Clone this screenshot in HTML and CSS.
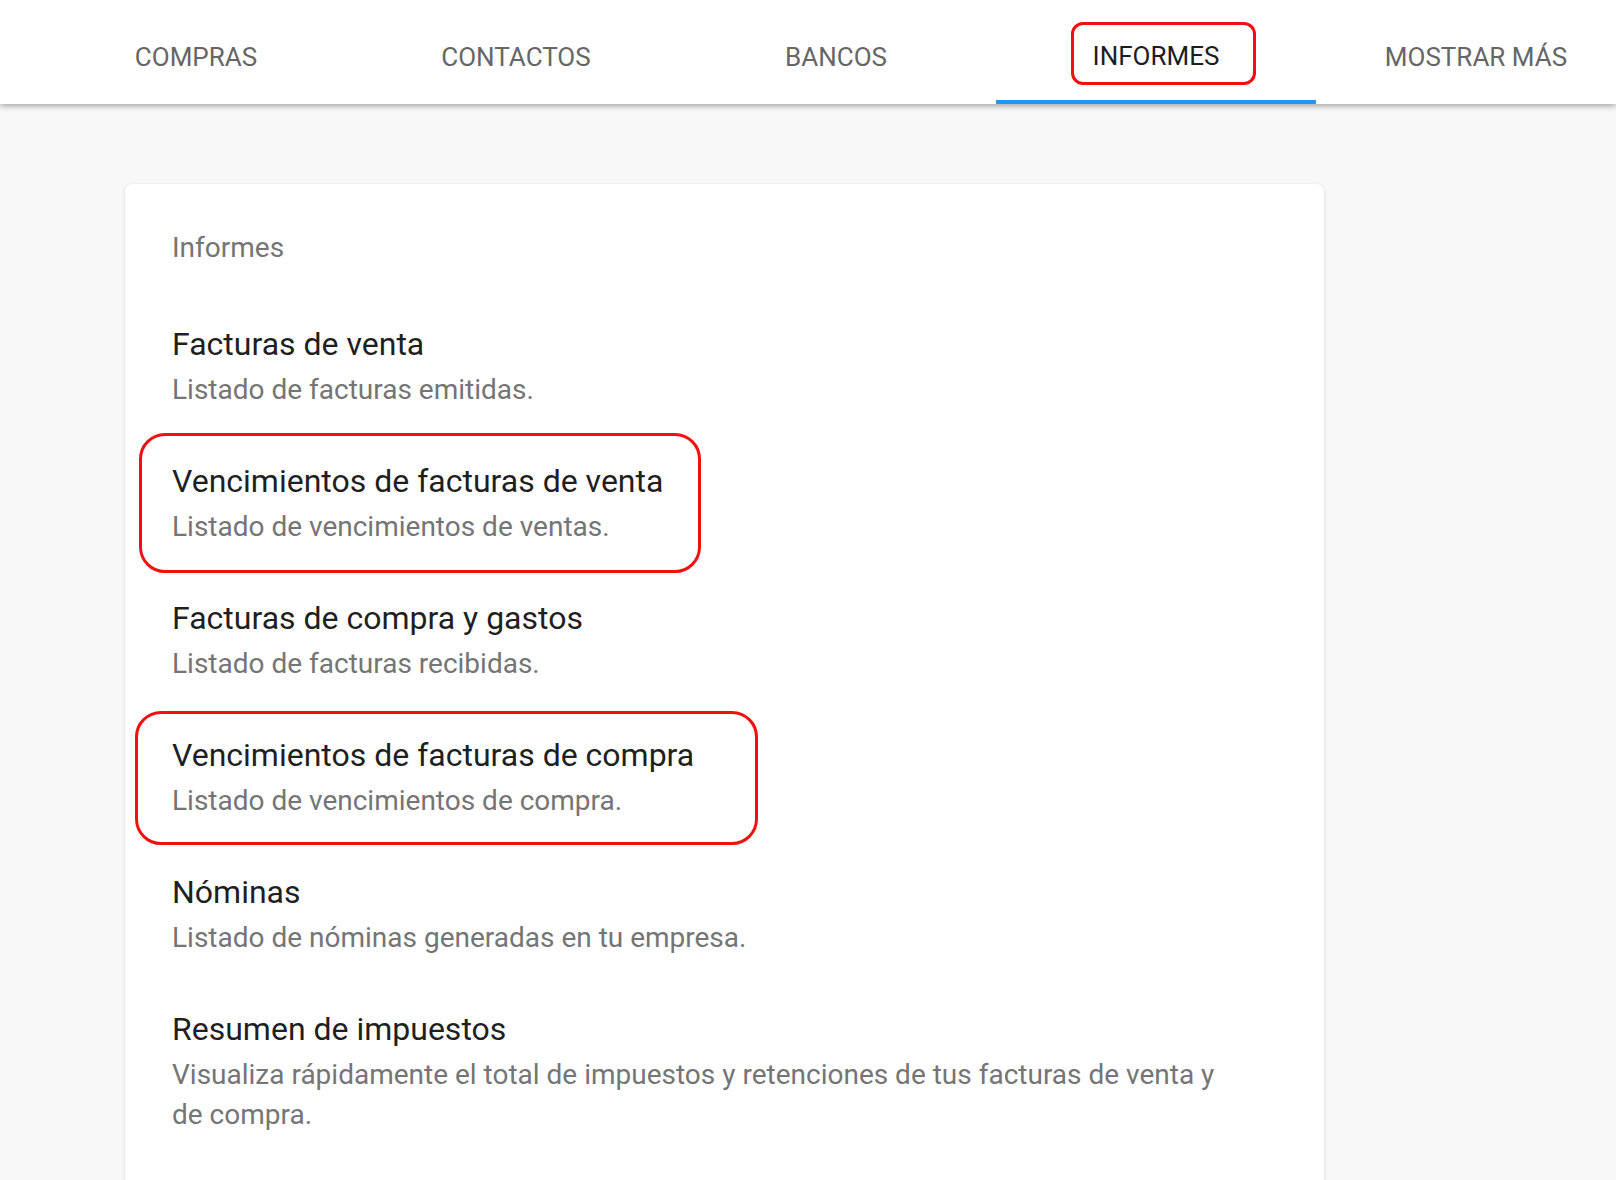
FILE: index.html
```html
<!DOCTYPE html>
<html lang="es">
<head>
    <meta charset="UTF-8">
    <title>Informes</title>
    <link rel="stylesheet" href="styles.css">
</head>
<body>
<!--barra de pestañas-->
<div class="tabs">
    <a class="tab" href="#">Compras</a>
    <a class="tab" href="#">Contactos</a>
    <a class="tab" href="#">Bancos</a>
    <a class="tab active" href="#"><span class="mark">Informes</span></a>
    <a class="tab" href="#">Mostrar más</a>
</div>

<div class="page">
    <div class="card">
        <div class="card-title">Informes</div>
        <ul class="reports">
            <li>
                <div class="name">Facturas de venta</div>
                <div class="desc">Listado de facturas emitidas.</div>
            </li>
            <li>
                <div class="name">Vencimientos de facturas de venta</div>
                <div class="desc">Listado de vencimientos de ventas.</div>
                <div class="note note-1"></div>
            </li>
            <li>
                <div class="name">Facturas de compra y gastos</div>
                <div class="desc">Listado de facturas recibidas.</div>
            </li>
            <li>
                <div class="name">Vencimientos de facturas de compra</div>
                <div class="desc">Listado de vencimientos de compra.</div>
                <div class="note note-2"></div>
            </li>
            <li>
                <div class="name">Nóminas</div>
                <div class="desc">Listado de nóminas generadas en tu empresa.</div>
            </li>
            <li>
                <div class="name">Resumen de impuestos</div>
                <div class="desc wide">Visualiza rápidamente el total de impuestos y retenciones de tus facturas de venta y de compra.</div>
            </li>
        </ul>
    </div>
</div>
</body>
</html>
```

FILE: styles.css
```css
* {
    margin: 0;
    padding: 0;
    box-sizing: border-box;
}

ul {
    list-style: none;
}

body {
    background-color: #f8f8f8;
    font-family: Roboto, "Liberation Sans", sans-serif;
    overflow: hidden;
}

/* pestañas */
.tabs {
    height: 104px;
    background-color: #fff;
    display: flex;
    padding-left: 36px;
    overflow: hidden;
    position: relative;
    z-index: 2;
    box-shadow: 0 2px 6px rgba(0, 0, 0, 0.35);
}

.tab {
    flex: 0 0 320px;
    display: flex;
    align-items: center;
    justify-content: center;
    text-decoration: none;
    text-transform: uppercase;
    font-size: 26px;
    color: #666;
    border-bottom: 4px solid transparent;
    padding-top: 14px;
}

.tab.active {
    color: #1d1d1d;
    border-bottom-color: #2196f3;
}

.mark {
    display: inline-block;
    padding: 16px 34px 11px 19px;
    margin: -8px 0 0 15px;
    border: 3px solid #f01010;
    border-radius: 12px;
}

/* contenido */
.page {
    padding: 80px 0 0 125px;
}

.card {
    width: 1199px;
    background-color: #fff;
    border-radius: 8px;
    box-shadow: 0 1px 4px rgba(0, 0, 0, 0.12);
    padding: 44px 47px 80px 47px;
    min-height: 1100px;
}

.card-title {
    font-size: 28px;
    color: #757575;
    line-height: 40px;
    margin-bottom: 56px;
}

.reports li {
    position: relative;
    height: 137px;
}

.name {
    font-size: 32px;
    color: #1f1f1f;
    line-height: 40px;
}

.desc {
    font-size: 28px;
    color: #757575;
    line-height: 40px;
    margin-top: 6px;
}

.desc.wide {
    width: 1060px;
}

/* marcas en rojo */
.note {
    position: absolute;
    border: 3px solid #f01010;
    border-radius: 26px;
}

.note-1 {
    left: -33px;
    top: -28px;
    width: 562px;
    height: 140px;
}

.note-2 {
    left: -37px;
    top: -24px;
    width: 623px;
    height: 134px;
}
```
